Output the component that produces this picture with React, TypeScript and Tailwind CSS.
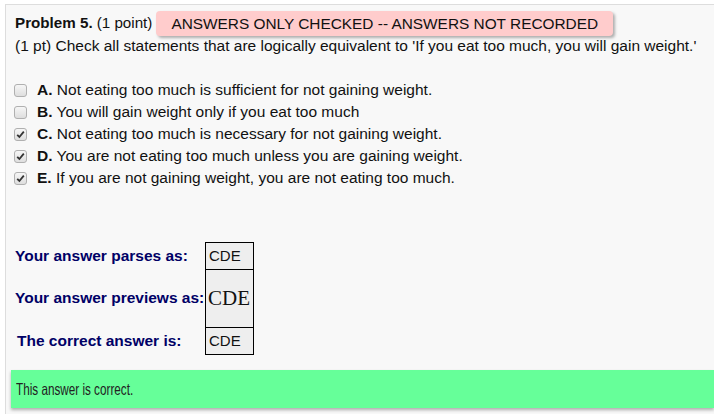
import React from "react"

const options = [
  { key: "A", text: "Not eating too much is sufficient for not gaining weight.", checked: false },
  { key: "B", text: "You will gain weight only if you eat too much", checked: false },
  { key: "C", text: "Not eating too much is necessary for not gaining weight.", checked: true },
  { key: "D", text: "You are not eating too much unless you are gaining weight.", checked: true },
  { key: "E", text: "If you are not gaining weight, you are not eating too much.", checked: true },
]

function Checkbox({ checked }: { checked: boolean }) {
  return (
    <span className="flex h-[13px] w-[13px] shrink-0 items-center justify-center rounded-[3px] border border-[#b0b0b0] bg-gradient-to-b from-[#f6f6f6] to-[#dedede]">
      {checked && (
        <svg width="9" height="9" viewBox="0 0 9 9">
          <path d="M1.2 4.8 L3.4 7 L7.8 1.6" fill="none" stroke="#333" strokeWidth="1.8" />
        </svg>
      )}
    </span>
  )
}

function AnswerRow({
  label,
  children,
  cell,
  labelClass = "",
}: {
  label: string
  children: React.ReactNode
  cell: string
  labelClass?: string
}) {
  return (
    <div className="flex">
      <div className={`flex w-[190px] items-center whitespace-nowrap text-[15.5px] font-bold text-[#000066] ${labelClass}`}>
        {label}
      </div>
      <div className={`flex w-[49px] items-center border-black bg-[#eeeeee] pl-[3px] ${cell}`}>
        {children}
      </div>
    </div>
  )
}

export default function App() {
  return (
    <div className="h-[414px] w-[714px] overflow-hidden bg-white pl-[5px] pt-[4px] font-['Liberation_Sans',Arial,sans-serif] text-[#111]">
      <div className="h-[420px] border-l border-t border-[#dddddd] bg-[#f8f8f8] pl-[9px] pt-[6px]">
        <div className="flex h-[25px] items-center text-[15.2px]">
          <span className="font-bold">Problem 5.</span>
          <span className="ml-[4px]">(1 point)</span>
          <span className="ml-[4px] flex h-[25px] items-center rounded-[4px] bg-[#ffcccc] px-[15px] text-[15.4px] shadow-[2px_2px_3px_rgba(0,0,0,0.3)]">
            ANSWERS ONLY CHECKED -- ANSWERS NOT RECORDED
          </span>
        </div>
        <p className="whitespace-nowrap text-[15.5px] leading-[20px]">
          (1 pt) Check all statements that are logically equivalent to 'If you eat too much, you will gain weight.'
        </p>

        <div className="mt-[23px] text-[15.5px] leading-[22px]">
          {options.map((o) => (
            <div key={o.key} className="flex items-center">
              <span className="-ml-px">
                <Checkbox checked={o.checked} />
              </span>
              <span className="ml-[10px]">
                <b>{o.key}.</b> {o.text}
              </span>
            </div>
          ))}
        </div>

        <div className="mt-[53px]">
          <AnswerRow label="Your answer parses as:" cell="h-[27px] border-x border-t text-[15px]">
            CDE
          </AnswerRow>
          <AnswerRow label="Your answer previews as:" cell="h-[58px] border-x border-t">
            <span className="-ml-[1px] font-['Liberation_Serif',serif] text-[21px]">CDE</span>
          </AnswerRow>
          <AnswerRow label="The correct answer is:" labelClass="pl-[2px]" cell="h-[28px] border text-[15px]">
            CDE
          </AnswerRow>
        </div>

        <div className="-ml-[4px] mt-[15px] flex h-[38px] items-center bg-[#66ff99] pl-[5px] text-[#222] shadow-[0_2px_3px_rgba(0,0,0,0.3)]">
          <span className="inline-block origin-left scale-x-[0.71] whitespace-nowrap text-[16.5px]">
            This answer is correct.
          </span>
        </div>
      </div>
    </div>
  )
}
